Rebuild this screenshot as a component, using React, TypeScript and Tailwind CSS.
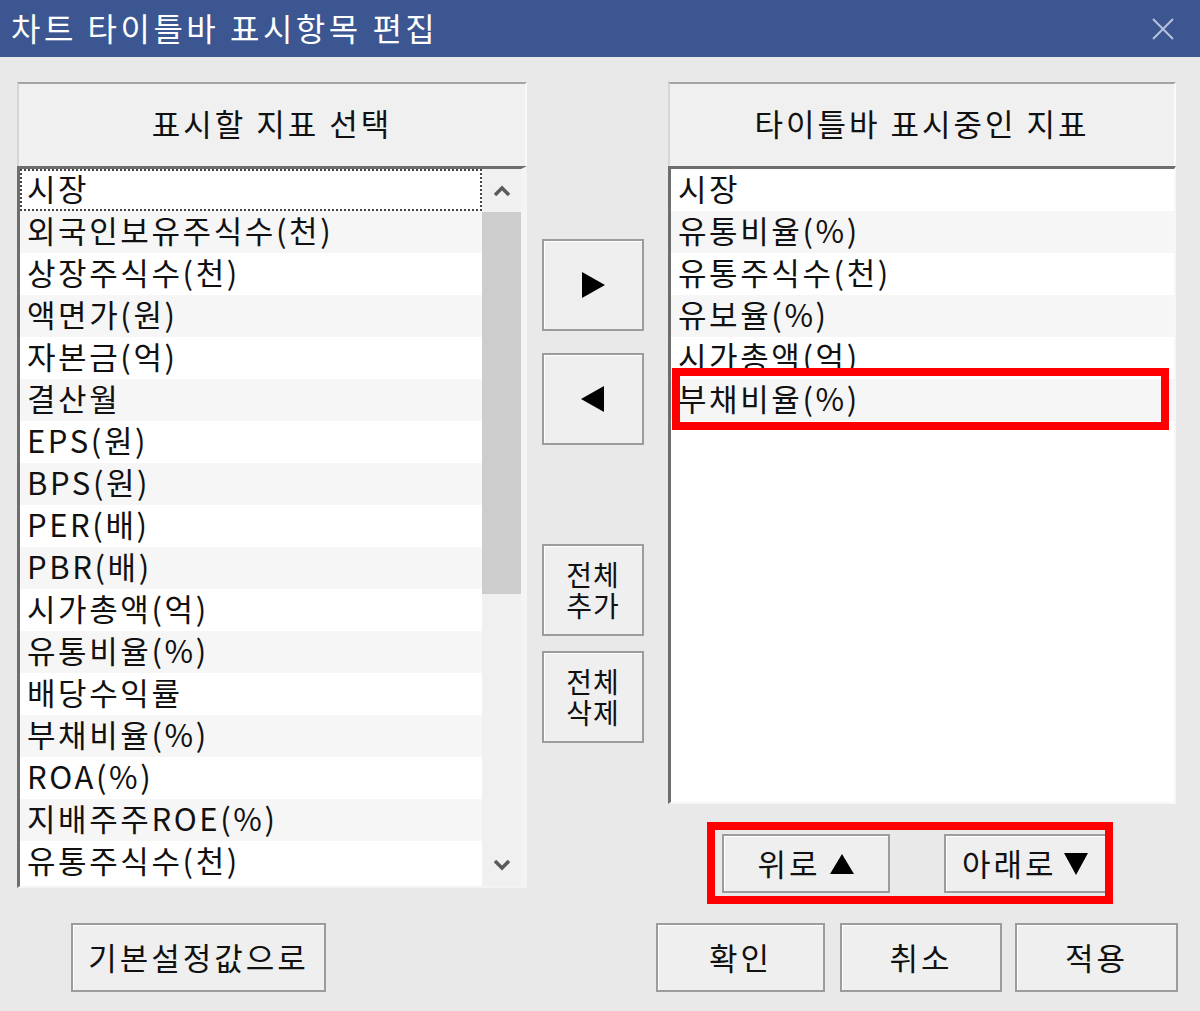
import React from 'react'

const FONT = { fontFamily: '"Noto Sans CJK KR", "Noto Sans", sans-serif' }

const leftItems = [
  '시장',
  '외국인보유주식수(천)',
  '상장주식수(천)',
  '액면가(원)',
  '자본금(억)',
  '결산월',
  'EPS(원)',
  'BPS(원)',
  'PER(배)',
  'PBR(배)',
  '시가총액(억)',
  '유통비율(%)',
  '배당수익률',
  '부채비율(%)',
  'ROA(%)',
  '지배주주ROE(%)',
  '유통주식수(천)',
]

const rightItems = ['시장', '유통비율(%)', '유통주식수(천)', '유보율(%)', '시가총액(억)', '부채비율(%)']

function WinButton({ className = '', children }: { className?: string; children: React.ReactNode }) {
  return (
    <div
      className={`flex items-center justify-center bg-[#efefef] border-2 border-[#9c9c9c] shadow-[inset_1px_1px_0_#ffffff] text-[31px] tracking-[3px] text-[#111] shrink-0 ${className}`}
    >
      {children}
    </div>
  )
}

function PanelHeader({ title }: { title: string }) {
  return (
    <div className="h-[84px] bg-[#f0f0f0] border-t-2 border-l-2 border-t-[#a4a4a4] border-l-[#d6d6d6] border-r-2 border-r-[#fafafa] flex items-center justify-center text-[31px] tracking-[3px] text-[#111] pb-[4px]">
      {title}
    </div>
  )
}

function Row({ text, index, focused }: { text: string; index: number; focused?: boolean }) {
  return (
    <div
      className={`h-[42px] leading-[38px] pl-[5px] text-[31px] tracking-[2.6px] text-[#111] whitespace-nowrap ${
        index % 2 === 1 ? 'bg-[#f6f6f6]' : 'bg-white'
      } ${focused ? 'border-2 border-dotted border-[#444]' : 'border-2 border-transparent'}`}
    >
      <span className="relative -top-[2px]">{text}</span>
    </div>
  )
}

function Chevron({ down }: { down?: boolean }) {
  return (
    <svg width="20" height="14" viewBox="0 0 20 14">
      <path
        d={down ? 'M3 3 L10 10 L17 3' : 'M3 11 L10 4 L17 11'}
        fill="none"
        stroke="#5a5a5a"
        strokeWidth="3.5"
      />
    </svg>
  )
}

export default function App() {
  return (
    <div className="w-[1200px] h-[1011px] bg-[#e9e9e9] flex flex-col overflow-hidden" style={FONT}>
      {/* title bar */}
      <div className="h-[57px] bg-[#3b5690] flex items-center justify-between pl-[11px] pr-[26px] shrink-0">
        <span className="text-[32px] text-white leading-none tracking-[3.5px] pb-[3px]">차트 타이틀바 표시항목 편집</span>
        <svg width="22" height="22" viewBox="0 0 22 22">
          <path d="M1 1 L21 21 M21 1 L1 21" stroke="#b7c3dc" strokeWidth="2" />
        </svg>
      </div>

      <div className="flex pt-[25px] pl-[17px]">
        {/* left column */}
        <div className="w-[510px] flex flex-col shrink-0">
          <PanelHeader title="표시할 지표 선택" />
          <div className="h-[722px] flex border-t-[3px] border-l-[3px] border-t-[#6e6e6e] border-l-[#6e6e6e] border-r-[6px] border-b-2 border-r-[#f4f4f4] border-b-[#f4f4f4] bg-white">
            <div className="flex-1 flex flex-col overflow-hidden">
              {leftItems.map((t, i) => (
                <Row key={i} text={t} index={i} focused={i === 0} />
              ))}
            </div>
            <div className="w-[39px] bg-[#f0f0f0] flex flex-col">
              <div className="h-[43px] flex items-center justify-center">
                <Chevron />
              </div>
              <div className="h-[382px] bg-[#cdcdcd]" />
              <div className="flex-1" />
              <div className="h-[43px] flex items-center justify-center">
                <Chevron down />
              </div>
            </div>
          </div>
          <WinButton className="mt-[35px] ml-[54px] w-[255px] h-[69px]">기본설정값으로</WinButton>
        </div>

        {/* middle column */}
        <div className="w-[102px] ml-[15px] flex flex-col pt-[157px] shrink-0">
          <WinButton className="h-[92px]">
            <svg width="26" height="28" viewBox="0 0 26 28">
              <path d="M2 1 L25 14 L2 27 Z" fill="#000" />
            </svg>
          </WinButton>
          <WinButton className="h-[92px] mt-[22px]">
            <svg width="26" height="28" viewBox="0 0 26 28">
              <path d="M24 1 L1 14 L24 27 Z" fill="#000" />
            </svg>
          </WinButton>
          <WinButton className="h-[92px] mt-[99px] text-center">
            <div className="flex flex-col items-center text-[28px] leading-[31px] tracking-[1px]">
              <span>전체</span>
              <span>추가</span>
            </div>
          </WinButton>
          <WinButton className="h-[92px] mt-[15px] text-center">
            <div className="flex flex-col items-center text-[28px] leading-[31px] tracking-[1px]">
              <span>전체</span>
              <span>삭제</span>
            </div>
          </WinButton>
        </div>

        {/* right column */}
        <div className="w-[508px] ml-[24px] flex flex-col shrink-0">
          <PanelHeader title="타이틀바 표시중인 지표" />
          <div className="relative h-[638px] border-t-[3px] border-l-[3px] border-t-[#6e6e6e] border-l-[#6e6e6e] border-r-2 border-b-2 border-r-[#f7f7f7] border-b-[#f7f7f7] bg-white flex flex-col overflow-hidden">
            {rightItems.map((t, i) => (
              <Row key={i} text={t} index={i} />
            ))}
            <div className="absolute left-[1px] top-[199px] w-[497px] h-[62px] border-[8px] border-[#ff0000]" />
          </div>

          <div className="mt-[18px] ml-[39px] w-[406px] h-[82px] border-[8px] border-[#ff0000] flex pl-[7px] pt-[4px] overflow-hidden">
            <WinButton className="w-[168px] h-[59px] gap-[8px]">
              <span>위로</span>
              <svg width="26" height="22" viewBox="0 0 26 22">
                <path d="M13 1 L25 21 L1 21 Z" fill="#000" />
              </svg>
            </WinButton>
            <WinButton className="w-[170px] h-[59px] ml-[54px] gap-[6px] justify-start pl-[16px]">
              <span>아래로</span>
              <svg width="26" height="24" viewBox="0 0 26 24">
                <path d="M1 1 L25 1 L13 23 Z" fill="#000" />
              </svg>
            </WinButton>
          </div>

          <div className="flex ml-[-12px] mt-[19px]">
            <WinButton className="w-[169px] h-[69px]">확인</WinButton>
            <WinButton className="w-[162px] h-[69px] ml-[15px]">취소</WinButton>
            <WinButton className="w-[163px] h-[69px] ml-[13px]">적용</WinButton>
          </div>
        </div>
      </div>
    </div>
  )
}
